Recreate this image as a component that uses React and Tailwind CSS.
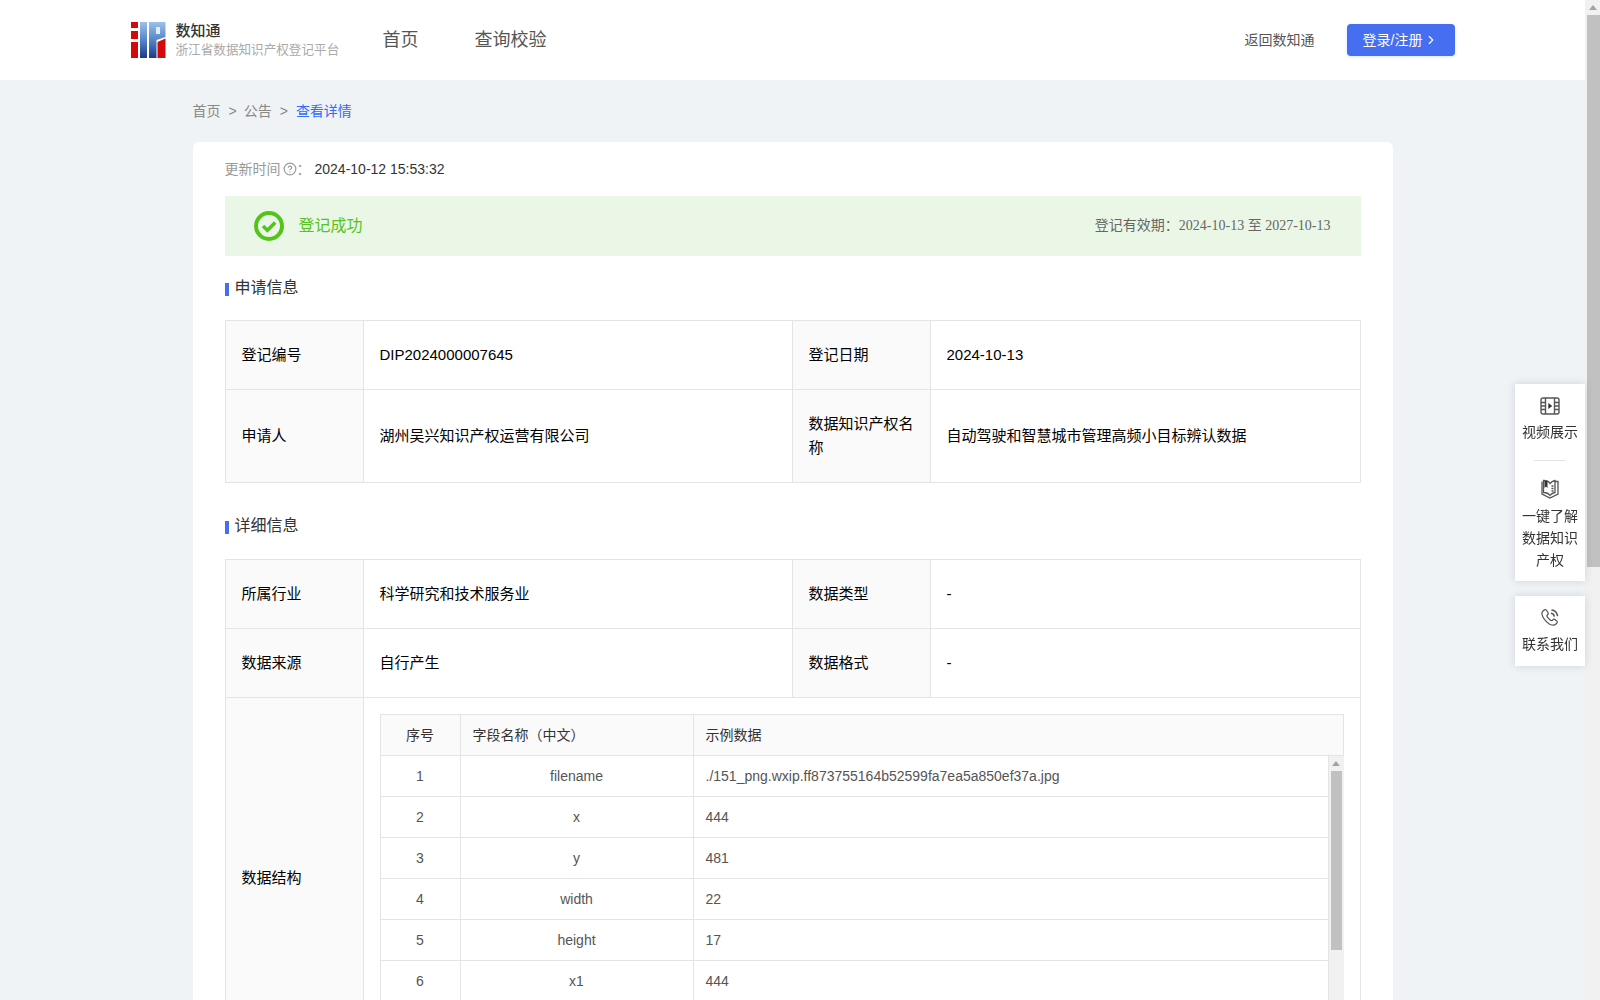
import { ChevronRight, CircleHelp } from "lucide-react";

const font = "font-['Liberation_Sans','Noto_Sans_CJK_SC',sans-serif]";

const structure = [
  ["filename", "./151_png.wxip.ff873755164b52599fa7ea5a850ef37a.jpg"],
  ["x", "444"],
  ["y", "481"],
  ["width", "22"],
  ["height", "17"],
  ["x1", "444"],
  ["y1", "481"],
];

function Logo() {
  return (
    <svg width="35" height="36" viewBox="0 0 35 36" className="shrink-0">
      <defs>
        <linearGradient id="logoBlue" x1="0" y1="0" x2="0" y2="1">
          <stop offset="0" stopColor="#9cc0ea" />
          <stop offset="0.5" stopColor="#5585c8" />
          <stop offset="1" stopColor="#1d3a86" />
        </linearGradient>
      </defs>
      <rect x="0" y="0" width="7" height="6" fill="#d40a0a" />
      <rect x="0" y="9" width="7" height="8" fill="#d40a0a" />
      <rect x="0" y="20" width="7" height="16" fill="#d40a0a" />
      <rect x="9" y="0" width="7" height="36" fill="url(#logoBlue)" />
      <path d="M18 0h16.500v15l-9 3v18H18z" fill="url(#logoBlue)" />
      <rect x="25" y="5" width="4" height="7" fill="#e4eefa" />
      <path d="M26.500 20l8-3.500V36h-8z" fill="#d40a0a" />
    </svg>
  );
}

function SectionTitle({ children }) {
  return (
    <div className="flex items-center h-6 text-[16px] text-[#333]">
      <span className="w-1 h-[13px] bg-[#456ef0] mr-1.5 mt-0.5"></span>
      {children}
    </div>
  );
}

function InfoRow({ a, b, c, d, height }) {
  return (
    <div className={`flex border-b border-[#e4e4e4] last:border-b-0 text-[15px] ${height}`}>
      <div className="w-[138px] shrink-0 flex items-center px-4 bg-[#fafafa] border-r border-[#e4e4e4] text-black">{a}</div>
      <div className="w-[429px] shrink-0 flex items-center px-4 border-r border-[#e4e4e4] text-black">{b}</div>
      <div className="w-[138px] shrink-0 flex items-center px-4 bg-[#fafafa] border-r border-[#e4e4e4] text-black leading-6">{c}</div>
      <div className="flex-1 flex items-center px-4 text-black">{d}</div>
    </div>
  );
}

function SideItem({ icon, children }) {
  return (
    <div className="flex flex-col items-center text-[14px] leading-[22px] text-[#333] text-center px-1.5">
      {icon}
      <div className="mt-1.5">{children}</div>
    </div>
  );
}

function ScrollArrow() {
  return (
    <div className="h-[15px] flex items-center justify-center">
      <span className="border-x-[4px] border-x-transparent border-b-[5px] border-b-[#a3a3a3]"></span>
    </div>
  );
}

export default function App() {
  return (
    <div className={`h-screen overflow-hidden flex bg-[#eff3f6] text-[14px] ${font}`}>
      <div className="flex-1 min-w-0">
        <header className="h-20 bg-white flex items-center justify-center">
          <div className="w-[1324px] flex items-center">
            <Logo />
            <div className="ml-[10px] w-[176px]">
              <div className="text-[15px] leading-5 font-medium text-[#333]">数知通</div>
              <div className="text-[12.6px] leading-[18px] text-[#aaa] whitespace-nowrap">浙江省数据知识产权登记平台</div>
            </div>
            <nav className="flex gap-14 ml-[31px] text-[18px] text-[#555]">
              <span>首页</span>
              <span>查询校验</span>
            </nav>
            <span className="ml-auto mr-8 text-[#555]">返回数知通</span>
            <button className="w-[108px] h-8 rounded-sm bg-[#456ef0] text-white flex items-center justify-center gap-0.5 shadow-[0_1px_3px_rgba(69,110,240,0.2)]">
              登录/注册
              <ChevronRight size={14} />
            </button>
          </div>
        </header>

        <div className="w-[1200px] mx-auto">
          <div className="h-[62px] flex items-center text-[#888]">
            <span>首页</span>
            <span className="ml-2 mr-[7px]">&gt;</span>
            <span>公告</span>
            <span className="mx-2">&gt;</span>
            <span className="text-[#2f6bf5]">查看详情</span>
          </div>

          <div className="bg-white rounded-md px-8 pt-[17px] pb-8">
            <div className="flex items-center h-5 leading-5">
              <span className="text-[#999]">更新时间</span>
              <CircleHelp size={14} className="text-[#999] ml-0.5" />
              <span className="text-[#999] w-[18px]">：</span>
              <span className="text-[#333]">2024-10-12 15:53:32</span>
            </div>

            <div className="mt-[17px] h-[60px] bg-[#ebf7e6] flex items-center pl-[29px] pr-[30px]">
              <svg width="30" height="30" viewBox="0 0 30 30" fill="none" stroke="#52c41a">
                <circle cx="15" cy="15" r="13" strokeWidth="4" />
                <path d="M9 15l4.400 4.200 7.800-7.600" strokeWidth="3.500" />
              </svg>
              <span className="ml-[15px] text-[16px] text-[#52c41a]">登记成功</span>
              <span className="ml-auto mb-0.5 text-[#666]">
                登记有效期：<span className="font-['Liberation_Serif','Noto_Sans_CJK_SC',serif]">2024-10-13 至 2027-10-13</span>
              </span>
            </div>

            <div className="mt-5">
              <SectionTitle>申请信息</SectionTitle>
            </div>
            <div className="mt-5 border border-[#e4e4e4]">
              <InfoRow height="h-[69px]" a="登记编号" b="DIP2024000007645" c="登记日期" d="2024-10-13" />
              <InfoRow height="h-[92px]" a="申请人" b="湖州吴兴知识产权运营有限公司" c="数据知识产权名称" d="自动驾驶和智慧城市管理高频小目标辨认数据" />
            </div>

            <div className="mt-[31px]">
              <SectionTitle>详细信息</SectionTitle>
            </div>
            <div className="mt-[21px] border border-[#e4e4e4]">
              <InfoRow height="h-[69px]" a="所属行业" b="科学研究和技术服务业" c="数据类型" d="-" />
              <InfoRow height="h-[69px]" a="数据来源" b="自行产生" c="数据格式" d="-" />
              <div className="flex">
                <div className="w-[138px] shrink-0 flex items-center px-4 bg-[#fafafa] border-r border-[#e4e4e4] text-black text-[15px]">数据结构</div>
                <div className="flex-1 p-4">
                  <div className="flex h-[42px] items-center bg-[#fafafa] border border-[#e4e4e4] text-[#333]">
                    <div className="w-[80px] h-full flex items-center justify-center border-r border-[#e4e4e4]">序号</div>
                    <div className="w-[233px] h-full flex items-center px-3 border-r border-[#e4e4e4]">字段名称（中文）</div>
                    <div className="flex-1 px-3">示例数据</div>
                  </div>
                  <div className="flex h-[286px] overflow-hidden border-l border-[#e4e4e4] text-[#555]">
                    <div className="flex-1 min-w-0 border-r border-[#e4e4e4]">
                      {structure.map((row, i) => (
                        <div key={i} className="flex h-[41px] items-center border-b border-[#e4e4e4]">
                          <div className="w-[80px] h-full flex items-center justify-center border-r border-[#e4e4e4]">{i + 1}</div>
                          <div className="w-[233px] h-full flex items-center justify-center border-r border-[#e4e4e4]">{row[0]}</div>
                          <div className="flex-1 px-3">{row[1]}</div>
                        </div>
                      ))}
                    </div>
                    <div className="w-[15px] shrink-0 bg-[#f1f1f1]">
                      <ScrollArrow />
                      <div className="h-[179px] mx-0.5 bg-[#c1c1c1]"></div>
                    </div>
                  </div>
                </div>
              </div>
            </div>
          </div>
        </div>
      </div>

      <div className="w-[15px] shrink-0 bg-[#f1f1f1]">
        <ScrollArrow />
        <div className="h-[552px] ml-0.5 bg-[#c1c1c1]"></div>
      </div>

      <aside className="fixed right-[15px] top-[384px] w-[70px] flex flex-col gap-[15px]">
        <div className="bg-white shadow-[0_0_8px_rgba(60,70,90,0.18)] pt-[13px] pb-[10px]">
          <SideItem
            icon={
              <svg width="20" height="18" viewBox="0 0 20 18" fill="none" stroke="#555" strokeWidth="1.400">
                <rect x="1" y="1" width="18" height="16" rx="2" />
                <path d="M5.500 1v16M14.500 1v16M1 5.500h4.500M1 9h4.500M1 12.500h4.500M14.500 5.500H19M14.500 9H19M14.500 12.500H19" />
                <path d="M8.300 6l4 3-4 3z" fill="#333" stroke="none" />
              </svg>
            }
          >
            视频展示
          </SideItem>
          <div className="w-8 h-px bg-[#e4e4e4] mx-auto mt-[17px] mb-[18px]"></div>
          <SideItem
            icon={
              <svg width="20" height="20" viewBox="0 0 20 20" fill="none" stroke="#555" strokeWidth="1.300">
                <path d="M2 2.500v12.500l8 4 8-4V2.500l-3 0" />
                <path d="M3.500 1.500c3 0 5.500 1 6.500 3 1.200-1.500 3-2.500 5-3v12c-2 .3-3.800 1.300-5 3-1.200-1.700-3.500-3-6.500-3z" />
                <path d="M4.500 2h3v7L6 7.500 4.500 9z" fill="#333" stroke="none" />
                <path d="M11.500 7h2M11.500 9.500h2M11.500 12h2" />
              </svg>
            }
          >
            一键了解
            <br />
            数据知识
            <br />
            产权
          </SideItem>
        </div>
        <div className="bg-white shadow-[0_0_8px_rgba(60,70,90,0.18)] pt-[12px] pb-[11px]">
          <SideItem
            icon={
              <svg width="20" height="19" viewBox="0 0 20 20" fill="none" stroke="#555" strokeWidth="1.300">
                <path d="M5.200 1.800c1 0 3 3 3 4s-1.500 1.500-1.500 2.500 3.500 5 5 5 1.200-1.500 2.300-1.500 3.700 1.800 3.700 3-2.200 3.300-4 3.300C8 18.100 1.500 10 1.500 5.500c0-1.800 2.500-3.700 3.700-3.700z" />
                <path d="M11 5.500c2 .3 3.300 1.600 3.500 3.500M11.500 2c3.500.3 6 3 6.500 6.500" strokeWidth="1.600" />
              </svg>
            }
          >
            联系我们
          </SideItem>
        </div>
      </aside>
    </div>
  );
}
